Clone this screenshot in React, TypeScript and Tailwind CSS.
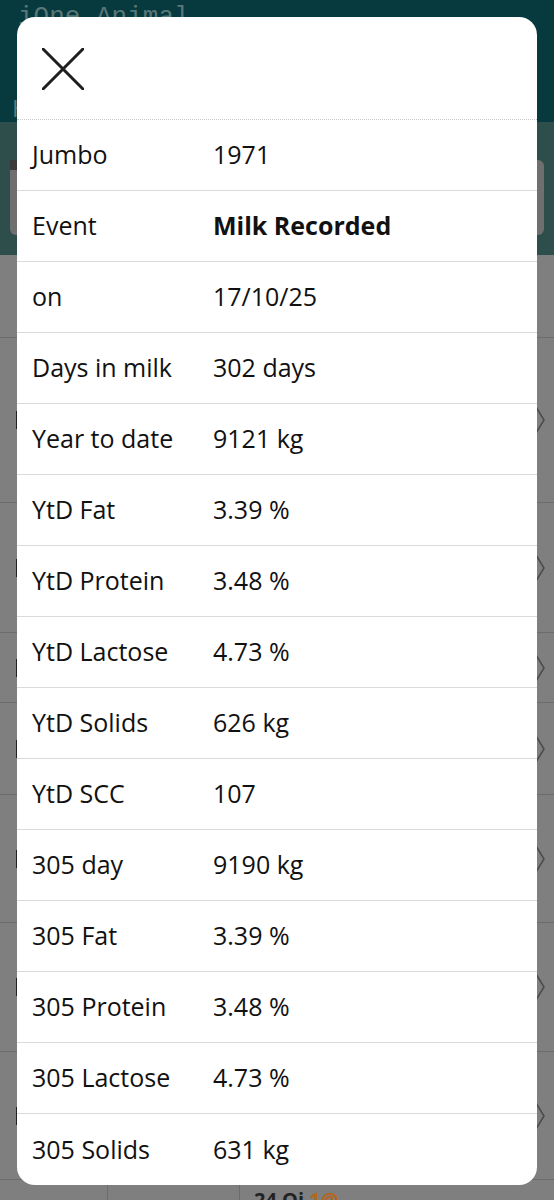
const rows: { label: string; value: string; bold?: boolean }[] = [
  { label: "Jumbo", value: "1971" },
  { label: "Event", value: "Milk Recorded", bold: true },
  { label: "on", value: "17/10/25" },
  { label: "Days in milk", value: "302 days" },
  { label: "Year to date", value: "9121 kg" },
  { label: "YtD Fat", value: "3.39 %" },
  { label: "YtD Protein", value: "3.48 %" },
  { label: "YtD Lactose", value: "4.73 %" },
  { label: "YtD Solids", value: "626 kg" },
  { label: "YtD SCC", value: "107" },
  { label: "305 day", value: "9190 kg" },
  { label: "305 Fat", value: "3.39 %" },
  { label: "305 Protein", value: "3.48 %" },
  { label: "305 Lactose", value: "4.73 %" },
  { label: "305 Solids", value: "631 kg" },
];

// background list rows (dimmed page behind the modal)
const bgRows = [
  { h: "h-[83px]", mark: false },
  { h: "h-[165px]", mark: true },
  { h: "h-[130px]", mark: true },
  { h: "h-[70px]", mark: true },
  { h: "h-[92px]", mark: true },
  { h: "h-[128px]", mark: true },
  { h: "h-[129px]", mark: true },
  { h: "h-[128px]", mark: true },
];

const CloseIcon = () => (
  <svg width="42" height="42" viewBox="0 0 42 42" fill="none">
    <path d="M1 1L41 41M41 1L1 41" stroke="#1f1f1f" strokeWidth="3" strokeLinecap="round" />
  </svg>
);

const Chevron = () => (
  <svg width="10" height="28" viewBox="0 0 10 28" fill="none">
    <path d="M1 1L9 14L1 27" stroke="#4a4a4a" strokeWidth="1.5" />
  </svg>
);

const App = () => {
  return (
    <div className="relative w-[554px] h-[1200px] overflow-hidden bg-[#7f7f7f] font-['Open_Sans',sans-serif]">
      {/* page behind */}
      <div className="flex flex-col">
        <div className="h-[122px] bg-[#073a3e] px-[18px] pt-[4px] flex flex-col justify-between pb-[2px]">
          <div className="font-['Liberation_Mono',monospace] text-[26px] text-[#5a7778] leading-none">
            iOne Animal
          </div>
          <div className="text-[24px] text-[#5d7c7d] leading-none -ml-[6px]">H</div>
        </div>
        <div className="h-[133px] bg-[#2e4e4c] pt-[38px] px-[10px]">
          <div className="h-[75px] rounded-[6px] bg-[#6f6f6f] relative">
            <div className="absolute left-0 top-0 w-[8px] h-[10px] bg-[#3a3a3a]" />
          </div>
        </div>
        {bgRows.map((r, i) => (
          <div
            key={i}
            className={`${r.h} border-b border-[#6c6c6c] flex items-center justify-between pl-[16px] pr-[9px]`}
          >
            {r.mark ? (
              <>
                <div className="w-[2px] h-[18px] bg-[#222]" />
                <Chevron />
              </>
            ) : null}
          </div>
        ))}
        <div className="flex h-[40px]">
          <div className="w-[108px] border-r border-[#6c6c6c]" />
          <div className="w-[132px] border-r border-[#6c6c6c]" />
          <div className="pl-[14px] pt-[8px] text-[20px] leading-[24px] text-[#222] font-bold">
            24 Oj <span className="text-[#b5651d]">1@</span>
          </div>
        </div>
      </div>

      {/* modal */}
      <div className="absolute left-[17px] top-[17px] w-[520px] rounded-[18px] bg-white overflow-hidden">
        <div className="h-[103px] border-b border-dotted border-[#c8c8c8] pl-[25px] pt-[31px]">
          <CloseIcon />
        </div>
        {rows.map((row, i) => (
          <div
            key={row.label}
            className={`h-[71px] flex items-center pl-[15px] text-[25px] text-[#111] ${
              i < rows.length - 1 ? "border-b border-[#dadada]" : ""
            }`}
          >
            <div className="w-[181px]">{row.label}</div>
            <div className={row.bold ? "font-bold" : ""}>{row.value}</div>
          </div>
        ))}
      </div>
    </div>
  );
};

export default App;
